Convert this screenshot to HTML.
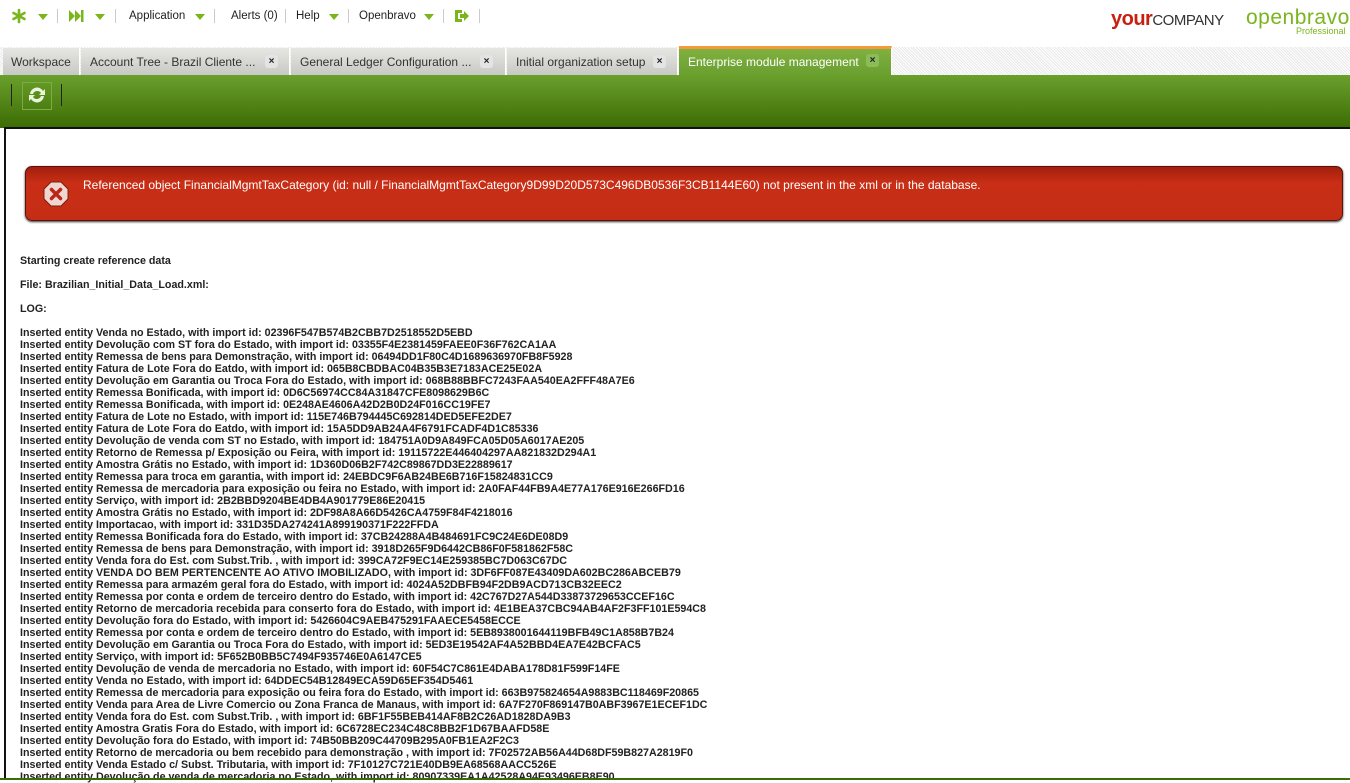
<!DOCTYPE html>
<html><head><meta charset="utf-8"><style>
*{margin:0;padding:0;box-sizing:border-box}
body{width:1350px;height:780px;overflow:hidden;background:#fff;font-family:"Liberation Sans",sans-serif;position:relative}
.nav{position:absolute;top:0;left:0;height:34px;font-size:11.5px;color:#222}
.nav span{position:absolute;top:10px;white-space:nowrap}
.dd{position:absolute;top:14px;width:0;height:0;border-left:5px solid transparent;border-right:5px solid transparent;border-top:6px solid #7ab51d}
.sep{position:absolute;top:9px;width:1px;height:14px;background:#ccc}
.tabs{position:absolute;top:47px;left:0;height:28px;width:1350px;background:repeating-linear-gradient(45deg,#fff 0 1px,#e8e8e8 1px 2px)}
.tab{position:absolute;top:1px;height:27px;background:linear-gradient(#e6e6e3,#c8c8c4);font-size:12px;color:#333;padding:7px 0 0 9px;white-space:nowrap;border-right:1px solid #fff}
.x{position:absolute;top:7px;width:13px;height:13px;border-radius:3px;background:#e4e4e4;font-size:10px;text-align:center;line-height:13px;color:#222;font-weight:bold}
.tab.act{background:linear-gradient(#80b040,#6aa030);color:#fff;border-top:3px solid #f59a3a;top:-1px;height:29px;padding-top:6px}
.tab.act .x{background:#8cbb5a;top:5px}
.tb{position:absolute;top:75px;left:0;width:1350px;height:53px;background:linear-gradient(#6aa02c,#3c6c04)}
.content{position:absolute;left:4px;top:127px;width:1350px;height:651px;background:#fff;border-left:2px solid #111;border-top:2px solid #111}
.err{position:absolute;left:19px;top:37px;width:1318px;height:55px;border-radius:7px;background:linear-gradient(#a31e0c,#c92e16 30%,#c42d15);border:1px solid #5a1208;box-shadow:0 1px 2px #333}
.err p{position:absolute;left:57px;top:11px;color:#fff;font-size:12px;white-space:nowrap}
.log{position:absolute;left:14px;top:126px;font-size:10.7px;font-weight:bold;color:#222;line-height:12px;white-space:pre}
.bottom{position:absolute;left:0;top:778px;width:1350px;height:2px;background:#3c6c04}
</style></head><body>
<div class="nav">
<svg style="position:absolute;left:11px;top:8px" width="16" height="16" viewBox="0 0 16 16"><g stroke="#7ab51d" stroke-width="2.6" stroke-linecap="round"><line x1="8" y1="2" x2="8" y2="14"/><line x1="2.5" y1="5" x2="13.5" y2="11"/><line x1="2.5" y1="11" x2="13.5" y2="5"/></g></svg>
<div class="dd" style="left:38px"></div><div class="sep" style="left:57px"></div>
<svg style="position:absolute;left:68px;top:9px" width="16" height="14" viewBox="0 0 16 14"><path d="M1 1L7 7L1 13Z M7 1L13 7L7 13Z" fill="#7ab51d"/><rect x="13" y="1" width="2.5" height="12" fill="#7ab51d"/></svg>
<div class="dd" style="left:95px"></div><div class="sep" style="left:115px"></div>
<span style="left:129px">Application</span><div class="dd" style="left:195px"></div><div class="sep" style="left:214px"></div>
<span style="left:231px">Alerts (0)</span><div class="sep" style="left:285px"></div>
<span style="left:296px">Help</span><div class="dd" style="left:329px"></div><div class="sep" style="left:348px"></div>
<span style="left:359px">Openbravo</span><div class="dd" style="left:424px"></div><div class="sep" style="left:443px"></div>
<svg style="position:absolute;left:454px;top:9px" width="16" height="14" viewBox="0 0 16 14"><path d="M1 1H8V4H4V10H8V13H1Z" fill="#7ab51d"/><path d="M6 5H10V2L15 7L10 12V9H6Z" fill="#7ab51d"/></svg>
<div class="sep" style="left:479px"></div>
</div>
<div style="position:absolute;left:1111px;top:8px;font-size:18px;letter-spacing:-0.5px;white-space:nowrap"><b style="color:#c8200f;font-size:20px">your</b><span style="color:#333;font-size:15px">COMPANY</span></div>
<div style="position:absolute;left:1246px;top:6px;font-size:21px;color:#7ab51d;white-space:nowrap;letter-spacing:0.5px">openbravo</div>
<div style="position:absolute;left:1296px;top:26px;font-size:9px;color:#7ab51d">Professional</div>
<div class="tabs">
<div class="tab" style="left:3px;width:77px;padding-left:8px">Workspace</div>
<div class="tab" style="left:81px;width:209px">Account Tree - Brazil Cliente ...<div class="x" style="left:184px">×</div></div>
<div class="tab" style="left:291px;width:215px">General Ledger Configuration ...<div class="x" style="left:189px">×</div></div>
<div class="tab" style="left:507px;width:171px">Initial organization setup<div class="x" style="left:146px">×</div></div>
<div class="tab act" style="left:679px;width:213px">Enterprise module management<div class="x" style="left:187px">×</div></div>
</div>
<div class="tb">
<div style="position:absolute;left:11px;top:9px;width:1px;height:22px;background:#222"></div>
<div style="position:absolute;left:22px;top:7px;width:30px;height:28px;border:1px solid #7eac40"></div>
<svg style="position:absolute;left:27px;top:10px" width="20" height="20" viewBox="0 0 20 20"><path d="M3 9A7 7 0 0 1 16 6L18 4V10H12L14 8A4.5 4.5 0 0 0 6 9Z" fill="#e8f5d8"/><path d="M17 11A7 7 0 0 1 4 14L2 16V10H8L6 12A4.5 4.5 0 0 0 14 11Z" fill="#e8f5d8"/></svg>
<div style="position:absolute;left:61px;top:9px;width:1px;height:22px;background:#222"></div>
</div>
<div class="content">
<div class="err">
<svg style="position:absolute;left:16px;top:13px" width="28" height="28" viewBox="0 0 28 28"><path d="M9 2H19L26 9V19L19 26H9L2 19V9Z" fill="#f1d6d0" stroke="#7a2010" stroke-width="1"/><path d="M9.5 9.5L18.5 18.5M18.5 9.5L9.5 18.5" stroke="#b8281a" stroke-width="3.5" stroke-linecap="round"/></svg>
<p>Referenced object FinancialMgmtTaxCategory (id: null / FinancialMgmtTaxCategory9D99D20D573C496DB0536F3CB1144E60) not present in the xml or in the database.</p>
</div>
<div class="log">Starting create reference data

File: Brazilian_Initial_Data_Load.xml:

LOG:

Inserted entity Venda no Estado, with import id: 02396F547B574B2CBB7D2518552D5EBD
Inserted entity Devolução com ST fora do Estado, with import id: 03355F4E2381459FAEE0F36F762CA1AA
Inserted entity Remessa de bens para Demonstração, with import id: 06494DD1F80C4D1689636970FB8F5928
Inserted entity Fatura de Lote Fora do Eatdo, with import id: 065B8CBDBAC04B35B3E7183ACE25E02A
Inserted entity Devolução em Garantia ou Troca Fora do Estado, with import id: 068B88BBFC7243FAA540EA2FFF48A7E6
Inserted entity Remessa Bonificada, with import id: 0D6C56974CC84A31847CFE8098629B6C
Inserted entity Remessa Bonificada, with import id: 0E248AE4606A42D2B0D24F016CC19FE7
Inserted entity Fatura de Lote no Estado, with import id: 115E746B794445C692814DED5EFE2DE7
Inserted entity Fatura de Lote Fora do Eatdo, with import id: 15A5DD9AB24A4F6791FCADF4D1C85336
Inserted entity Devolução de venda com ST no Estado, with import id: 184751A0D9A849FCA05D05A6017AE205
Inserted entity Retorno de Remessa p/ Exposição ou Feira, with import id: 19115722E446404297AA821832D294A1
Inserted entity Amostra Grátis no Estado, with import id: 1D360D06B2F742C89867DD3E22889617
Inserted entity Remessa para troca em garantia, with import id: 24EBDC9F6AB24BE6B716F15824831CC9
Inserted entity Remessa de mercadoria para exposição ou feira no Estado, with import id: 2A0FAF44FB9A4E77A176E916E266FD16
Inserted entity Serviço, with import id: 2B2BBD9204BE4DB4A901779E86E20415
Inserted entity Amostra Grátis no Estado, with import id: 2DF98A8A66D5426CA4759F84F4218016
Inserted entity Importacao, with import id: 331D35DA274241A899190371F222FFDA
Inserted entity Remessa Bonificada fora do Estado, with import id: 37CB24288A4B484691FC9C24E6DE08D9
Inserted entity Remessa de bens para Demonstração, with import id: 3918D265F9D6442CB86F0F581862F58C
Inserted entity Venda fora do Est. com Subst.Trib. , with import id: 399CA72F9EC14E259385BC7D063C67DC
Inserted entity VENDA DO BEM PERTENCENTE AO ATIVO IMOBILIZADO, with import id: 3DF6FF087E43409DA602BC286ABCEB79
Inserted entity Remessa para armazém geral fora do Estado, with import id: 4024A52DBFB94F2DB9ACD713CB32EEC2
Inserted entity Remessa por conta e ordem de terceiro dentro do Estado, with import id: 42C767D27A544D33873729653CCEF16C
Inserted entity Retorno de mercadoria recebida para conserto fora do Estado, with import id: 4E1BEA37CBC94AB4AF2F3FF101E594C8
Inserted entity Devolução fora do Estado, with import id: 5426604C9AEB475291FAAECE5458ECCE
Inserted entity Remessa por conta e ordem de terceiro dentro do Estado, with import id: 5EB8938001644119BFB49C1A858B7B24
Inserted entity Devolução em Garantia ou Troca Fora do Estado, with import id: 5ED3E19542AF4A52BBD4EA7E42BCFAC5
Inserted entity Serviço, with import id: 5F652B0BB5C7494F935746E0A6147CE5
Inserted entity Devolução de venda de mercadoria no Estado, with import id: 60F54C7C861E4DABA178D81F599F14FE
Inserted entity Venda no Estado, with import id: 64DDEC54B12849ECA59D65EF354D5461
Inserted entity Remessa de mercadoria para exposição ou feira fora do Estado, with import id: 663B975824654A9883BC118469F20865
Inserted entity Venda para Area de Livre Comercio ou Zona Franca de Manaus, with import id: 6A7F270F869147B0ABF3967E1ECEF1DC
Inserted entity Venda fora do Est. com Subst.Trib. , with import id: 6BF1F55BEB414AF8B2C26AD1828DA9B3
Inserted entity Amostra Gratis Fora do Estado, with import id: 6C6728EC234C48C8BB2F1D67BAAFD58E
Inserted entity Devolução fora do Estado, with import id: 74B50BB209C44709B295A0FB1EA2F2C3
Inserted entity Retorno de mercadoria ou bem recebido para demonstração , with import id: 7F02572AB56A44D68DF59B827A2819F0
Inserted entity Venda Estado c/ Subst. Tributaria, with import id: 7F10127C721E40DB9EA68568AACC526E
Inserted entity Devolução de venda de mercadoria no Estado, with import id: 80907339EA1A42528A94E93496EB8E90</div>
</div>
<div class="bottom"></div>
</body></html>
